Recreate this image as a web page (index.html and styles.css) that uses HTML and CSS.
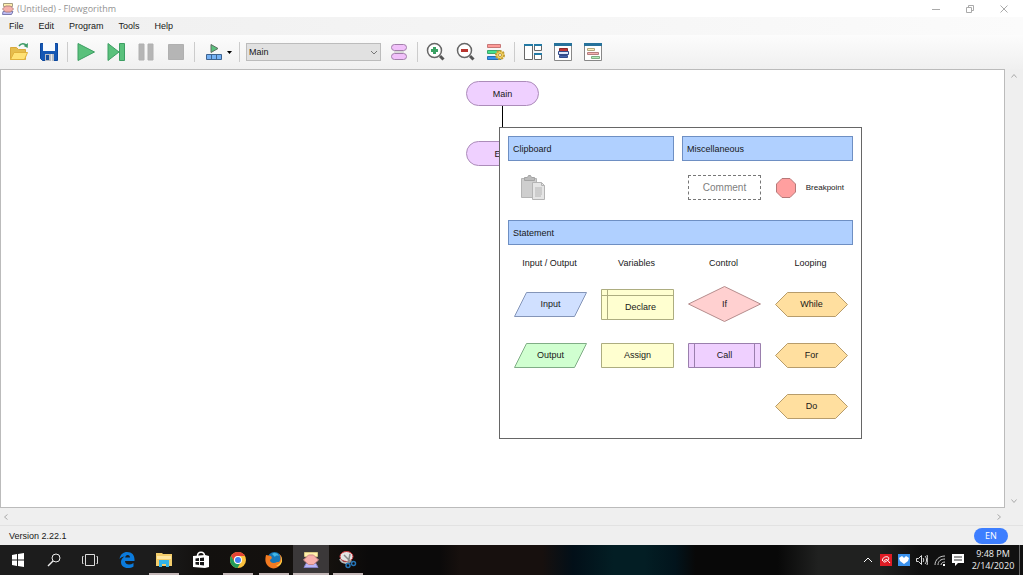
FILE: index.html
```html
<!DOCTYPE html>
<html lang="en">
<head>
<meta charset="utf-8">
<title>(Untitled) - Flowgorithm</title>
<link rel="stylesheet" href="styles.css">
</head>
<body>
<header class="titlebar">
  <svg class="app-icon" viewBox="0 0 12 12"><path d="M1.500.5h9v3h-9z" fill="#fff0ad" stroke="#a69d80"/><path d="M1 8.500h10l-1.500 3h-9z" fill="#bdbdf5" stroke="#7c7cae"/><path d="M.5 6 3.500 3h5l3 3-3 3h-5z" fill="#f6b0aa" stroke="#b4827f"/></svg>
  <h1 class="title">(Untitled) - Flowgorithm</h1>
  <div class="window-buttons">
    <button class="window-button" aria-label="Minimize"><svg viewBox="0 0 8 8"><path d="M0 4.500h8"/></svg></button>
    <button class="window-button" aria-label="Restore"><svg viewBox="0 0 8 8"><path d="M.5 2.500h5v5h-5zM2.500 2.500v-2h5v5h-2"/></svg></button>
    <button class="window-button" aria-label="Close"><svg viewBox="0 0 8 8"><path d="m.5.5 7 7m0-7-7 7"/></svg></button>
  </div>
</header>
<nav class="menubar">
  <button class="menu">File</button><button class="menu">Edit</button><button class="menu">Program</button><button class="menu">Tools</button><button class="menu">Help</button>
</nav>
<div class="toolbar">
  <button class="tool" aria-label="Open"><svg viewBox="0 0 20 20"><path d="M1.500 17.500V5.500h6l2 2h7v10z" fill="#e5bd4d" stroke="#d9a93d"/><path d="m1.500 17.500 3.500-7h13.500l-3 7z" fill="#ffe275" stroke="#e0b23e"/><path d="M10 4c2-3 5.500-3 7.500-.5" fill="none" stroke="#3f9b67" stroke-width="1.500"/><path d="m19 1-.3 5-4-2z" fill="#3f9b67"/></svg></button>
  <button class="tool" aria-label="Save"><svg viewBox="0 0 20 20"><path d="M1.500 1.500h17v17h-15l-2-2z" fill="#1557b4" stroke="#0b479d"/><path d="M4 1h12v8H4z" fill="#f7fbff"/><path d="M6 12h9v7H6z" fill="#b9bdc4"/><path d="M7 13h3v5H7z" fill="#174f9f"/><path d="M12 12h1v7h-1z" fill="#e9e9e9"/></svg></button>
  <span class="separator"></span>
  <button class="tool" aria-label="Run"><svg viewBox="0 0 20 20"><path d="M2 1.500v17L18.500 10z" fill="#5ac17c" stroke="#3d9e63"/></svg></button>
  <button class="tool" aria-label="Step"><svg viewBox="0 0 20 20"><path d="M2 1.500v17L13 10z" fill="#5ac17c" stroke="#3d9e63"/><path d="M13.500 1.500h5v17h-5z" fill="#5ac17c" stroke="#3d9e63"/></svg></button>
  <button class="tool" aria-label="Pause"><svg viewBox="0 0 20 20"><path d="M3 2h5v16H3zM12 2h5v16h-5z" fill="#b5b5b5" stroke="#b0b0b0"/></svg></button>
  <button class="tool" aria-label="Stop"><svg viewBox="0 0 20 20"><path d="M2.500 2.500h15v15h-15z" fill="#b5b5b5" stroke="#b0b0b0"/></svg></button>
  <span class="separator"></span>
  <button class="tool tool-wide" aria-label="Run speed"><svg viewBox="0 0 20 20"><path d="M7 2.500v8l7-4z" fill="#5ac17c" stroke="#5d6c61"/><path d="M2.500 12.500h15v5h-15zM7.500 12.500v5m5-5v5" fill="#75b1f4" stroke="#3e638f"/></svg><svg class="caret" viewBox="0 0 5 3"><path d="M0 0h5L2.500 3z"/></svg></button>
  <span class="separator"></span>
  <label class="picker"><select class="picker-select" aria-label="Function"><option>Main</option></select><svg class="picker-arrow" viewBox="0 0 8 5"><path d="m1 1 3 3 3-3"/></svg></label>
  <button class="tool" aria-label="Functions"><svg viewBox="0 0 20 20"><rect x="2.500" y="2.500" width="15" height="6" rx="3" fill="#f1c1fa" stroke="#a17fa9"/><path d="M5 10h10" stroke="#bbb"/><rect x="2.500" y="11.500" width="15" height="6" rx="3" fill="#f1c1fa" stroke="#a17fa9"/></svg></button>
  <span class="separator"></span>
  <button class="tool" aria-label="Zoom in"><svg viewBox="0 0 20 20"><path d="m14 14 3.500 3.500" stroke="#555" stroke-width="3"/><circle cx="8.500" cy="8.500" r="7" fill="#fff" stroke="#666" stroke-width="1.500"/><path d="M8.500 5v7M5 8.500h7" stroke="#3aa163" stroke-width="3"/></svg></button>
  <button class="tool" aria-label="Zoom out"><svg viewBox="0 0 20 20"><path d="m14 14 3.500 3.500" stroke="#555" stroke-width="3"/><circle cx="8.500" cy="8.500" r="7" fill="#fff" stroke="#666" stroke-width="1.500"/><path d="M5 8.500h7" stroke="#b8352f" stroke-width="3"/></svg></button>
  <button class="tool" aria-label="Chart style"><svg viewBox="0 0 20 20"><path d="M1.500 2.500h13v3h-13z" fill="#ff9b98" stroke="#c77776"/><path d="M1.500 8.500h13v3h-13z" fill="#45e18b" stroke="#3ca66c"/><path d="M1.500 14.500h13v3h-13z" fill="#3592ec" stroke="#276dae"/><circle cx="14" cy="13" r="4" fill="#f5d35e" stroke="#c29d35" stroke-width="2" stroke-dasharray="2 1"/><circle cx="14" cy="13" r="1.500" fill="#fff" stroke="#b99839"/></svg></button>
  <span class="separator"></span>
  <button class="tool" aria-label="Arrange windows"><svg viewBox="0 0 20 20"><g fill="#fff" stroke="#666"><path d="M1.500 2.500h8v15h-8zM11.500 2.500h7v6h-7zM11.500 11.500h7v6h-7z"/></g><path d="M1 3h9m1 0h8m-8 9h8" stroke="#237aa5" stroke-width="2"/></svg></button>
  <button class="tool" aria-label="Variable watch"><svg viewBox="0 0 20 20"><path d="M1.500 1.500h17v17h-17z" fill="#fff" stroke="#888"/><path d="M1 2.500h18" stroke="#27729b" stroke-width="3"/><path d="M6.500 6.500h8v3h-8z" fill="#be3535" stroke="#8b2929"/><path d="M5.500 9.500h10v3h-10z" fill="#dbe6fa" stroke="#334a89"/><path d="M6.500 13.500h8v2h-8z" fill="#4667b0" stroke="#344c8b"/></svg></button>
  <button class="tool" aria-label="Source code"><svg viewBox="0 0 20 20"><path d="M1.500 1.500h17v17h-17z" fill="#fff" stroke="#888"/><path d="M1 2.500h18" stroke="#27729b" stroke-width="3"/><path d="M4.500 6.500h7v2h-7z" fill="#fff1be" stroke="#b2a77e"/><path d="M4.500 10.500h11v2h-11z" fill="#f5b2b2" stroke="#b58080"/><path d="M8.500 14.500h8v2h-8z" fill="#b4edbb" stroke="#7eac83"/></svg></button>
</div>
<main class="workspace">
  <section class="canvas">
    <div class="flow"><div class="terminal">Main</div><div class="connector"></div><div class="terminal">End</div></div>
    <div class="palette">
      <div class="palette-top">
        <section class="clipboard">
          <h2 class="palette-heading">Clipboard</h2>
          <div class="palette-items"><button class="paste" aria-label="Paste"><svg viewBox="0 0 26 26"><path d="M1.500 3.500h15v19h-15z" fill="#cecece" stroke="#b4b4b4"/><path d="M4.500 5.500v-3h3l1-2h2l1 2h3v3z" fill="#bbb" stroke="#a4a4a4"/><path d="M12.500 7.500h9l3 3v14h-12z" fill="#e5e5e5" stroke="#b4b4b4"/><path d="M21.500 7.500v3h3M15 13h7m-7 2h7m-7 2h7m-7 2h7m-7 2h6" fill="none" stroke="#b4b4b4"/></svg></button></div>
        </section>
        <section class="misc">
          <h2 class="palette-heading">Miscellaneous</h2>
          <div class="palette-items"><button class="comment">Comment</button><button class="breakpoint"><svg viewBox="0 0 20 20"><path d="M6 .5h8L19.500 6v8L14 19.500H6L.5 14V6z" fill="#ff9f9f" stroke="#b67878"/></svg>Breakpoint</button></div>
        </section>
      </div>
      <h2 class="palette-heading">Statement</h2>
      <div class="shapes">
        <h3 class="group">Input / Output</h3><h3 class="group">Variables</h3><h3 class="group">Control</h3><h3 class="group">Looping</h3>
        <button class="shape"><svg viewBox="0 0 73 36"><path d="M12.500 6.500h60l-12 24H.5z" fill="#d0e0ff" stroke="#8495b8"/></svg><span>Input</span></button>
        <button class="shape"><svg viewBox="0 0 73 36"><path d="M.5 3.500h72v30H.5zM6.500 3.500v30M.5 9.500h72" fill="#ffffd0" stroke="#adad80"/></svg><span class="inset">Declare</span></button>
        <button class="shape"><svg viewBox="0 0 73 36"><path d="m.5 18 36-17.500 36 17.500-36 17.500z" fill="#ffd0d0" stroke="#b58c8c"/></svg><span>If</span></button>
        <button class="shape"><svg viewBox="0 0 73 36"><path d="m.5 18.500 12-12h48l12 12-12 12h-48z" fill="#ffdf9f" stroke="#b79c6b"/></svg><span>While</span></button>
        <button class="shape"><svg viewBox="0 0 73 36"><path d="M12.500 6.500h60l-12 24H.5z" fill="#d0ffd0" stroke="#80ad86"/></svg><span>Output</span></button>
        <button class="shape"><svg viewBox="0 0 73 36"><path d="M.5 6.500h72v24H.5z" fill="#ffffd0" stroke="#adad80"/></svg><span>Assign</span></button>
        <button class="shape"><svg viewBox="0 0 73 36"><path d="M.5 6.500h72v24H.5zM6.500 6.500v24m60-24v24" fill="#efd0ff" stroke="#9a7fad"/></svg><span>Call</span></button>
        <button class="shape"><svg viewBox="0 0 73 36"><path d="m.5 18.500 12-12h48l12 12-12 12h-48z" fill="#ffdf9f" stroke="#b79c6b"/></svg><span>For</span></button>
        <button class="shape shape-last"><svg viewBox="0 0 73 36"><path d="m.5 18.500 12-12h48l12 12-12 12h-48z" fill="#ffdf9f" stroke="#b79c6b"/></svg><span>Do</span></button>
      </div>
    </div>
  </section>
  <div class="scroll scroll-vertical"><button class="scroll-button" aria-label="Scroll up"><svg viewBox="0 0 6 6"><path d="m.5 4.500 2.500-3 2.500 3"/></svg></button><button class="scroll-button" aria-label="Scroll down"><svg viewBox="0 0 6 6"><path d="m.5 1.500 2.500 3 2.500-3"/></svg></button></div>
</main>
<div class="scroll scroll-horizontal"><button class="scroll-button" aria-label="Scroll left"><svg viewBox="0 0 6 6"><path d="m4.500.5-3 2.500 3 2.500"/></svg></button><button class="scroll-button" aria-label="Scroll right"><svg viewBox="0 0 6 6"><path d="m1.500.5 3 2.500-3 2.500"/></svg></button></div>
<div class="statusbar"><span>Version 2.22.1</span><button class="language">EN</button></div>
<footer class="taskbar">
  <button class="task" aria-label="Start"><svg viewBox="0 0 20 20"><path d="m4 5 5-1v5.500H4zM10 4l6-1v6.500h-6zM4 10.500h5V16l-5-1zM10 10.500h6V17l-6-1z" fill="#fff"/></svg></button>
  <button class="task" aria-label="Search"><svg viewBox="0 0 20 20"><circle cx="12" cy="8" r="4" fill="none" stroke="#eee"/><path d="m9 11-5 5" stroke="#eee" stroke-width="1.500"/></svg></button>
  <button class="task" aria-label="Task view"><svg viewBox="0 0 20 20"><path d="M5.500 4.500h9v11h-9zM3.500 6.500h-1v7h1m13-7h1v7h-1" fill="none" stroke="#ddd"/></svg></button>
  <div class="apps">
    <button class="task" aria-label="Edge"><svg viewBox="0 0 20 20"><path d="M2.500 9C3.500 4 6.500 2 10 2c5 0 7.500 3 7.500 7.500V11H8c0 2.500 2 3.500 4 3.500 1.500 0 3-.5 4.500-1.500v3.500c-1.500 1-3.500 1.500-5.500 1.500-4.500 0-7-2.500-7-6 0-2.500 1.500-4.500 3.500-5.500C5.500 6.500 3.500 7.500 2.500 9zm5.700-1.500H13C13 6 12.200 5 10.700 5 9.300 5 8.500 6 8.200 7.500z" fill="#0b7bdc"/></svg></button>
    <button class="task running" aria-label="File Explorer"><svg viewBox="0 0 20 20"><path d="M2 3h6l1 1h9v12H2z" fill="#f3cd6b"/><path d="M3 6h14v3H3z" fill="#ffe7a2"/><path d="M5 10h10v7h-3v-3H8v3H5z" fill="#33b3e8"/></svg></button>
    <button class="task" aria-label="Store"><svg viewBox="0 0 20 20"><path d="M6.500 6c0-5 7-5 7 0" fill="none" stroke="#fff" stroke-width="1.500"/><path d="m2 6 12-1 4 1v11l-4 1-12-1z" fill="#fff"/><path d="M4.500 8.500 8 8v3H4.500zM9 8l4-.5V11H9zM4.500 12H8v3l-3.500-.5zM9 12h4v3.500L9 15z" fill="#171717"/></svg></button>
    <button class="task running" aria-label="Chrome"><svg viewBox="0 0 20 20"><circle cx="10" cy="10" r="8" fill="#fbc13d"/><path d="M3.100 6A8 8 0 0 1 17 6h-7a4 4 0 0 0-3.500 6z" fill="#e34436"/><path d="M3.100 6a8 8 0 0 0 6.400 12l3.500-6a4 4 0 0 1-6.500 0z" fill="#239c58"/><circle cx="10" cy="10" r="4" fill="#fff"/><circle cx="10" cy="10" r="3" fill="#427ff1"/></svg></button>
    <button class="task running" aria-label="Firefox"><svg viewBox="0 0 20 20"><circle cx="10.500" cy="9" r="7" fill="#1677b8"/><path d="M8 4c2-2 6-1 7 2-2-1-4 0-4 1z" fill="#43b8e6"/><path d="M2 5c2 0 3 1 5 1l1 2-2 2c0 3 4 4 7 2l2 0c2-2 2-5 0-8 3 2 4 6 2 9-2 6-9 7-13 3C1 13 1 9 2 5z" fill="#f27b22"/><path d="M16 5c3 4 1 9-4 11 6 1 8-7 4-11z" fill="#ffd546"/></svg></button>
    <button class="task running active" aria-label="Flowgorithm"><svg viewBox="0 0 20 20"><path d="M3.500 2.500h13v4h-13z" fill="#fff0ac" stroke="#d6c681"/><path d="M5 13.500h10l2 4H3z" fill="#b8b5f6" stroke="#8582c5"/><path d="m2.500 10 5-5h5l5 5-5 4.500h-5z" fill="#f8b0ab" stroke="#cc8886"/></svg></button>
    <button class="task running" aria-label="Snipping Tool"><svg viewBox="0 0 20 20"><ellipse cx="8.500" cy="6.500" rx="6.500" ry="5" fill="#e4e4e4" stroke="#cb3137"/><path d="M2 9c2 5 8 5 11 1" fill="none" stroke="#bbb" stroke-width="2"/><path d="m6 5 8 8m-2-9-2 10" stroke="#888" stroke-width="1.500"/><circle cx="10" cy="15.500" r="2" fill="none" stroke="#2574b7" stroke-width="1.500"/><circle cx="15.500" cy="13.500" r="2" fill="none" stroke="#2574b7" stroke-width="1.500"/></svg></button>
  </div>
  <div class="tray">
    <button class="tray-button" aria-label="Show hidden icons"><svg viewBox="0 0 12 12"><path d="m2 8 4-4 4 4" fill="none" stroke="#fff"/></svg></button>
    <button class="tray-button" aria-label="Avira"><svg viewBox="0 0 12 12"><path d="M0 0h12v12H0z" fill="#df1c25"/><path d="M2.500 7C2 4 5 2 8 3c2 1 0 4-3 5-2 .5-2-1 0-2l2-.5 3 3.500" fill="none" stroke="#fff"/></svg></button>
    <button class="tray-button" aria-label="Sync"><svg viewBox="0 0 12 12"><path d="M0 0h12v12H0z" fill="#3b92ed"/><path d="m1 4 3-2 2 2 2-2 3 2-1 3-4 3-4-3z" fill="#fff"/></svg></button>
    <button class="tray-button" aria-label="Volume"><svg viewBox="0 0 12 12"><path d="M.5 4.500h2l3-3v9l-3-3h-2zM7 4c1 1 1 3 0 4m2-6c2 2 2 6 0 8m2-9c1 3 1 7 0 10" fill="none" stroke="#ddd"/></svg></button>
    <button class="tray-button" aria-label="Network"><svg viewBox="0 0 12 12"><path d="M1 11C1 6 5 2 11 2M4 11c0-4 3-6 7-6M7 11c0-2 2-3 4-3" fill="none" stroke="#ccc"/><path d="M9 10h2v2H9z" fill="#fff"/></svg></button>
    <button class="tray-button" aria-label="Notifications"><svg viewBox="0 0 12 12"><path d="M0 0h12v9H6l-3 3V9H0z" fill="#fff"/><path d="M2 3h8M2 6h8" stroke="#333"/></svg></button>
    <time class="clock" datetime="2020-02-14T21:48"><span>9:48 PM</span><span>2/14/2020</span></time>
    <span class="show-desktop"></span>
  </div>
</footer>
</body>
</html>
```
FILE: styles.css
```css
* { box-sizing: border-box; }
body {
  margin: 0;
  min-height: 100vh;
  display: flex;
  flex-direction: column;
  background: #efefef;
  color: #181818;
  font: 9px/12px "Liberation Sans", Arial, sans-serif;
}
button, select { margin: 0; padding: 0; border: 0; background: none; color: inherit; font: inherit; }
h1, h2, h3 { margin: 0; font: inherit; }
svg { display: block; flex: none; }

.titlebar { display: flex; align-items: center; height: 17px; padding-left: 2px; background: #fff; color: #929292; font-family: "Open Sans", sans-serif; }
.app-icon { width: 12px; height: 12px; margin-right: 3px; }
.title { flex: 1; }
.window-buttons { display: flex; padding-right: 2px; }
.window-button { display: grid; place-items: center; width: 34px; height: 16px; }
.window-button svg { width: 8px; height: 8px; fill: none; stroke: #aaa; }

.menubar { display: flex; gap: 15px; height: 18px; padding: 0 9px; background: linear-gradient(90deg, #efefef, #fbfbfb); }
.toolbar { display: flex; align-items: center; height: 34px; padding-left: 4px; background: linear-gradient(#fcfcfc, #f0f0f0); }
.tool { display: flex; align-items: center; justify-content: center; width: 30px; height: 28px; }
.tool svg { width: 20px; height: 20px; }
.tool-wide { width: 38px; gap: 3px; padding-left: 2px; }
.tool .caret { width: 5px; height: 3px; }
.separator { width: 1px; height: 20px; margin: 0 3px; background: #ccc; }
.picker { display: grid; align-items: center; width: 135px; height: 18px; margin: 0 3px; }
.picker-select { grid-area: 1 / 1; width: 100%; height: 18px; padding-left: 2px; border: 1px solid #bcbcbc; background: #e1e1e1; appearance: none; }
.picker-arrow { grid-area: 1 / 1; justify-self: end; width: 8px; height: 5px; margin-right: 3px; fill: none; stroke: #777; pointer-events: none; }

.workspace { display: flex; flex: 1; }
.canvas { position: relative; flex: 1; min-height: 438px; border: 1px solid #bbb; background: #fff; }
.flow { display: flex; flex-direction: column; align-items: center; padding-top: 11px; }
.terminal { display: grid; place-items: center; width: 73px; height: 25px; border: 1px solid #ac8cba; border-radius: 13px; background: #efd0ff; }
.connector { width: 1px; height: 35px; background: #000; }

.palette { position: absolute; top: 57px; left: 498px; width: 363px; padding: 8px 8px 14px; border: 1px solid #666; background: #fff; }
.palette-top { display: flex; gap: 8px; }
.clipboard { flex: 1; }
.misc { width: 171px; }
.palette-heading { height: 25px; padding: 0 4px; border: 1px solid #6e8fc3; background: #b0d0ff; line-height: 24px; }
.palette-items { display: flex; align-items: center; justify-content: space-between; height: 59px; padding: 0 9px 6px 6px; }
.paste { padding-left: 6px; }
.paste svg { width: 26px; height: 26px; }
.comment { width: 73px; height: 25px; border: 1px dashed #777; color: #808080; font-size: 10px; }
.breakpoint { display: flex; align-items: center; gap: 10px; font-size: 8px; }
.breakpoint svg { width: 20px; height: 20px; }
.shapes { display: grid; grid-template-columns: repeat(4, 73px); grid-template-rows: 16px repeat(3, 36px); justify-content: space-between; row-gap: 15px; padding: 10px 5px 0 6px; }
.group { justify-self: center; padding-right: 2px; line-height: 16px; }
.shape { display: grid; place-items: center; }
.shape svg { grid-area: 1 / 1; width: 73px; height: 36px; }
.shape span { grid-area: 1 / 1; }
.shape .inset { padding: 6px 0 0 6px; }
.shape-last { grid-column: 4; }

.scroll { display: flex; justify-content: space-between; background: #efefef; }
.scroll-button { display: grid; place-items: center; width: 12px; height: 14px; }
.scroll-button svg { width: 6px; height: 6px; fill: none; stroke: #aaa; }
.scroll-vertical { flex-direction: column; align-items: center; width: 18px; }
.scroll-horizontal { align-items: center; height: 17px; padding-right: 18px; }
.statusbar { display: flex; align-items: center; justify-content: space-between; height: 20px; padding: 0 15px 0 9px; border-top: 1px solid #e2e2e2; }
.language { width: 34px; height: 16px; border-radius: 8px; background: #3d7eff; color: #fff; font-family: "Open Sans", sans-serif; }

.taskbar {
  display: flex;
  height: 30px;
  color: #eee;
  background: linear-gradient(90deg, #1c1c1c 0 15%, #12100e 20%, #15110e 32%, #0b0a0a 36% 43%, #17100e 45% 53%, #020f18 56%, #031e24 60% 63%, #02141c 66%, #080808 68% 76%, #202120 80% 86%, #101010 90%);
}
.task { display: grid; place-items: center; width: 36px; height: 30px; }
.task svg { width: 20px; height: 20px; }
.apps { display: flex; width: 257px; margin-left: 1px; }
.apps .task { flex: 1; }
.running { background: linear-gradient(#c4b8b8, #c4b8b8) center bottom / 30px 2px no-repeat; }
.active { background: linear-gradient(#c4b8b8, #c4b8b8) bottom / 100% 2px no-repeat #3b3839; }
.tray { display: flex; margin-left: auto; }
.tray-button { display: grid; place-items: center; width: 18px; height: 30px; }
.tray-button svg { width: 12px; height: 12px; }
.clock { display: flex; flex-direction: column; align-items: center; justify-content: center; width: 52px; font-family: "Open Sans", sans-serif; }
.show-desktop { width: 4px; border-left: 1px solid #666; }
```
